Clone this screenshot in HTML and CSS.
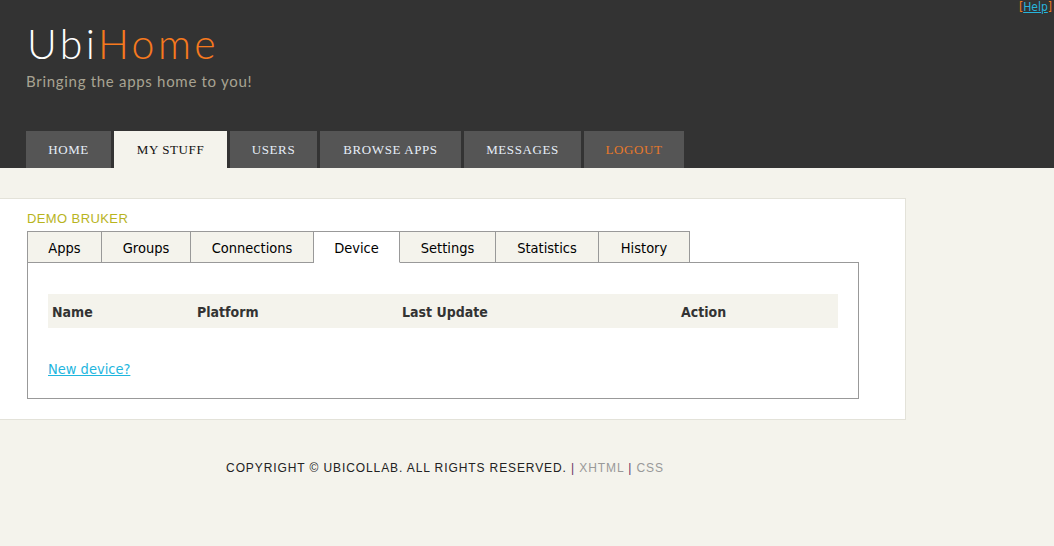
FILE: index.html
```html
<!DOCTYPE html>
<html>
<head>
<meta charset="utf-8">
<title>UbiHome</title>
<link rel="stylesheet" href="styles.css">
</head>
<body>
<div class="header">
  <div class="help"><span class="br">[</span><a href="#">Help</a><span class="br">]</span></div>
  <div class="brand">
    <h1 class="logo"><span class="ubi">Ubi</span><span class="home">Home</span></h1>
    <p class="tagline">Bringing the apps home to you!</p>
  </div>
  <ul class="nav">
    <li class="w-home"><a href="#">HOME</a></li>
    <li class="w-stuff active"><a href="#">MY STUFF</a></li>
    <li class="w-users"><a href="#">USERS</a></li>
    <li class="w-browse"><a href="#">BROWSE APPS</a></li>
    <li class="w-msg"><a href="#">MESSAGES</a></li>
    <li class="w-logout logout"><a href="#">LOGOUT</a></li>
  </ul>
</div>
<div class="main">
  <div class="content">
    <div class="user">DEMO BRUKER</div>
    <ul class="tabs">
      <li class="t-apps">Apps</li>
      <li class="t-groups">Groups</li>
      <li class="t-conn">Connections</li>
      <li class="t-device active">Device</li>
      <li class="t-settings">Settings</li>
      <li class="t-stats">Statistics</li>
      <li class="t-hist">History</li>
    </ul>
    <div class="panel">
      <div class="thead">
        <span class="c-name">Name</span>
        <span class="c-platform">Platform</span>
        <span class="c-update">Last Update</span>
        <span class="c-action">Action</span>
      </div>
      <a class="newdev" href="#">New device?</a>
    </div>
  </div>
  <div class="footer">COPYRIGHT © UBICOLLAB. ALL RIGHTS RESERVED. <span class="sep">|</span> <a href="#">XHTML</a> <span class="sep">|</span> <a href="#">CSS</a></div>
</div>
</body>
</html>
```
FILE: styles.css
```css
* { box-sizing: border-box; }
html, body { margin: 0; padding: 0; }
body { background: #f4f3ec; font-family: "DejaVu Sans", sans-serif; height: 546px; overflow: hidden; }
ul { list-style: none; margin: 0; padding: 0; }

.header { background: #333333; height: 168px; position: relative; display: flex; flex-direction: column; justify-content: space-between; padding-left: 26px; }
.help { position: absolute; top: 0; right: 2px; font-family: "DejaVu Sans Condensed", "DejaVu Sans", sans-serif; font-size: 12px; line-height: 15px; }
.help .br { color: #f07a1e; }
.help a { color: #28b4dc; }

.brand { padding-top: 22px; }
.logo { margin: 0; font-family: "Lato", sans-serif; font-weight: 300; font-size: 41px; line-height: 44px; letter-spacing: 3.4px; padding-left: 1px; }
.logo .ubi { color: #ffffff; }
.logo .home { color: #f6791e; }
.tagline { margin: 6px 0 0; font-family: "Lato", sans-serif; font-size: 15px; color: #a8a392; letter-spacing: 0.7px; }

.nav { display: flex; gap: 3px; height: 37px; }
.nav li { background: #555555; display: flex; align-items: center; justify-content: center; }
.nav li a { font-family: "Liberation Serif", serif; font-size: 13px; color: #e6eef8; text-decoration: none; letter-spacing: 0.6px; }
.nav li.active { background: #f4f3ec; }
.nav li.active a { color: #111111; }
.nav li.logout a { color: #e8792a; }
.w-home { width: 85px; }
.w-stuff { width: 113px; }
.w-users { width: 87px; }
.w-browse { width: 141px; }
.w-msg { width: 117px; }
.w-logout { width: 100px; }

.main { padding-top: 30px; }
.content { width: 906px; background: #ffffff; border: 1px solid #e3e2d9; border-left: none; padding: 10px 0 20px 27px; height: 222px; }
.user { font-family: "Liberation Sans", sans-serif; font-size: 13px; color: #b8b41e; height: 22px; line-height: 17px; letter-spacing: 0.4px; padding-top: 1px; }
.tabs { display: flex; height: 32px; position: relative; z-index: 1; }
.tabs li { border: 1px solid #999999; border-left: none; background: #f4f3ec; display: flex; align-items: center; justify-content: center; font-family: "DejaVu Sans Condensed", "DejaVu Sans", sans-serif; font-size: 14.5px; color: #000000; padding-top: 1px; }
.tabs li:first-child { border-left: 1px solid #999999; }
.tabs li.active { background: #ffffff; border-bottom-color: #ffffff; }
.t-apps { width: 75px; }
.t-groups { width: 89px; }
.t-conn { width: 123px; }
.t-device { width: 86px; }
.t-settings { width: 96px; }
.t-stats { width: 103px; }
.t-hist { width: 91px; }

.panel { width: 832px; height: 137px; border: 1px solid #999999; margin-top: -1px; padding: 31px 20px 0 20px; }
.thead { display: flex; align-items: center; background: #f4f3ec; height: 34px; font-family: "DejaVu Sans Condensed", "DejaVu Sans", sans-serif; font-weight: bold; font-size: 14px; color: #333333; padding-left: 4px; padding-top: 1px; }
.thead span { display: block; }
.c-name { width: 145px; }
.c-platform { width: 205px; }
.c-update { width: 279px; }
.newdev { display: inline-block; margin-top: 33px; font-family: "DejaVu Sans Condensed", "DejaVu Sans", sans-serif; font-size: 14.5px; color: #1fb6de; }

.footer { width: 890px; text-align: center; margin-top: 41px; font-family: "Liberation Sans", sans-serif; font-size: 12px; letter-spacing: 0.9px; color: #222222; }
.footer .sep { color: #663366; }
.footer a { color: #999999; text-decoration: none; }
```
